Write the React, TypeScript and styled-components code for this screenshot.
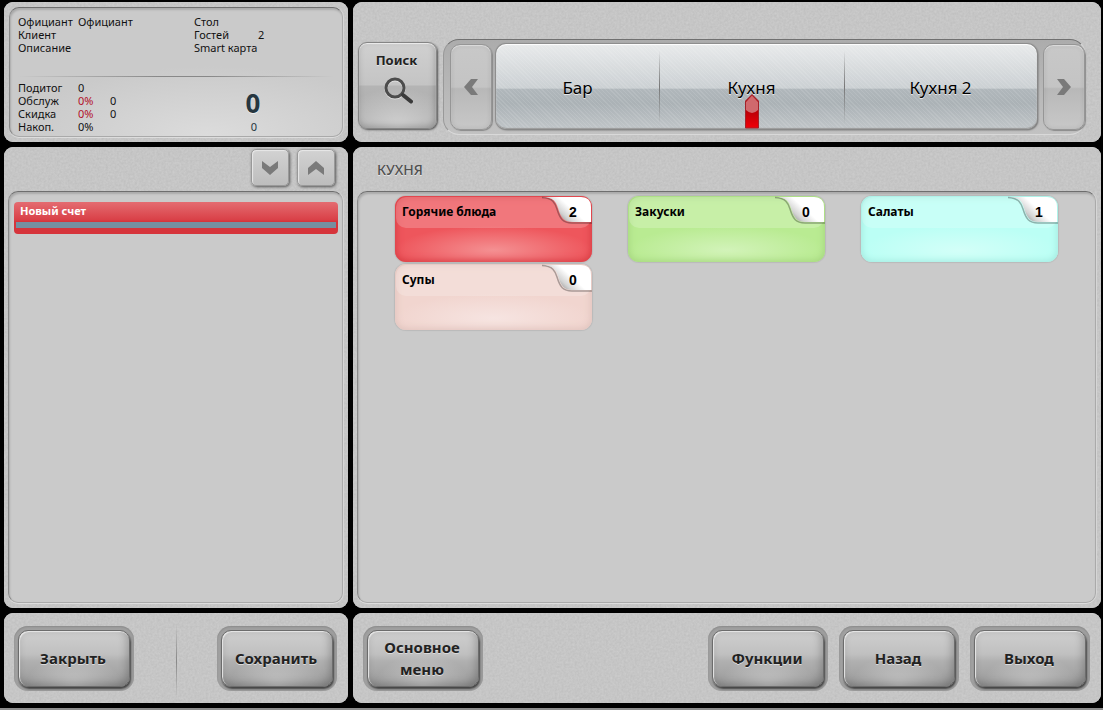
import React, { useState } from "react";
import styled, { createGlobalStyle } from "styled-components";

const humanist = `"Noto Sans", "Open Sans", sans-serif`;

const GlobalStyle = createGlobalStyle`
  *, *::before, *::after { box-sizing: border-box; }
  body {
    margin: 0;
    background: #000;
    color: #111;
    font-family: ${humanist};
    font-size: 11px;
  }
  button { font: inherit; color: inherit; padding: 0; border: 0; cursor: pointer; }
  dl, dd, dt, h1, ul { margin: 0; padding: 0; font: inherit; }
`;

const Page = styled.div`
  display: flex;
  flex-direction: column;
  min-height: 100vh;
`;

const Screen = styled.main`
  flex: 1;
  display: grid;
  grid-template-columns: minmax(0, 344fr) minmax(0, 748fr);
  grid-template-rows: 140px 1fr 90px;
  gap: 5px;
  padding: 2px 2px 5px 4px;
`;

const Panel = styled.section`
  position: relative;
  isolation: isolate;
  display: flex;
  flex-direction: column;
  border-radius: 9px;
  overflow: hidden;
  background: #c6c6c6;
`;

const InfoPanel = styled(Panel)`
  padding: 5px;
`;

const ListPanel = styled(Panel)`
  padding: 0 5px 5px 4px;
`;

const TopPanel = styled(Panel)`
  flex-direction: row;
  align-items: flex-end;
  gap: 6px;
  padding: 0 15px 7px 5px;
`;

const ActionPanel = styled(Panel)`
  flex-direction: row;
  align-items: flex-start;
  gap: 11px;
  padding: 13px 11px 0 10px;
`;

const GrainSvg = styled.svg`
  position: absolute;
  inset: 0;
  z-index: -1;
  width: 100%;
  height: 100%;
`;

const Inset = styled.div`
  flex: 1;
  border-radius: 10px;
  border: 1px solid #aaa;
  border-top-color: #6e6e6e;
  border-left-color: #8a8a8a;
  background: #cacaca;
  box-shadow: inset 1px 2px 2px rgba(0, 0, 0, 0.16), 0 1px 0 #ddd, 1px 0 0 #d6d6d6;
`;

const InfoInset = styled(Inset)`
  display: flex;
  flex-direction: column;
  padding: 7px 8px 3px;
  line-height: 13px;
  background: radial-gradient(ellipse 190px 70px at 60% 100%, #dcdcdc, #cacaca);
`;

const OrderFacts = styled.dl`
  flex: 1;
  display: grid;
  grid-template-columns: 60px 116px 64px 1fr;
  grid-auto-rows: 13px;
`;

const HRule = styled.div`
  height: 1px;
  margin: 0 0 4px;
  background: linear-gradient(90deg, transparent, #888 45%, #888 60%, transparent);
`;

const Totals = styled.div`
  display: grid;
  grid-template-columns: 1fr 168px;
`;

const Sums = styled.dl`
  display: grid;
  grid-template-columns: 60px 32px 1fr;
  grid-auto-rows: 13px;
`;

const Percent = styled.dd<{ $red?: boolean }>`
  color: ${(p) => (p.$red ? "#b3122a" : "inherit")};
`;

const Grand = styled.div`
  display: flex;
  flex-direction: column;
  align-items: center;
  padding: 8px 0 0 6px;
`;

const GrandTotal = styled.strong`
  font-size: 26px;
  line-height: 28px;
  color: #263640;
  text-shadow: 0 1px 0 #eee;
`;

const GrandSub = styled.span`
  padding: 3px 0 0 2px;
  color: #263640;
`;

const SearchButton = styled.button`
  display: flex;
  flex-direction: column;
  align-items: center;
  gap: 7px;
  width: 79px;
  height: 87px;
  padding: 8px 2px 0 0;
  margin-bottom: 6px;
  border: 1px solid #858585;
  border-radius: 9px;
  font-size: 13px;
  line-height: 18px;
  font-weight: 700;
  color: #222;
  text-shadow: 0 1px 0 #e4e4e4;
  background:
    radial-gradient(ellipse 60px 40px at 50% 100%, rgba(255, 255, 255, 0.45), transparent),
    linear-gradient(#d0d0d0, #c4c4c4 49%, #b4b4b4 51%, #acacac);
  box-shadow: inset 0 1px 1px #eee, inset -1px -2px 6px rgba(0, 0, 0, 0.22), 1px 1px 2px #555;
`;

const TabRail = styled.nav`
  flex: 1;
  display: flex;
  align-items: flex-start;
  height: 96px;
  padding: 3px 0 0 6px;
  border: 1px solid #d9d9d9;
  border-top-color: #707070;
  border-left-color: #999;
  border-radius: 16px;
  background: linear-gradient(#acacac, #c2c2c2);
`;

const RailArrow = styled.button`
  display: flex;
  align-items: center;
  justify-content: center;
  width: 42px;
  height: 86px;
  margin-top: 1px;
  border: 1px solid #969696;
  border-radius: 10px;
  background: linear-gradient(#c8c8c8, #c4c4c4 50%, #b8b8b8 52%, #c8c8c8);
  box-shadow: inset 0 1px 1px #ddd, inset 0 0 5px rgba(0, 0, 0, 0.1), 1px 1px 1px #8a8a8a;
`;

const Tabs = styled.div`
  flex: 1;
  display: flex;
  height: 85px;
  margin: 1px 6px 0 4px;
  border-radius: 10px;
  background:
    repeating-linear-gradient(45deg, rgba(255, 255, 255, 0.1) 0 1px, transparent 1px 3px),
    linear-gradient(#e8eaeb, #cbd0d3 52%, #b0b7bb 53%, #abb2b6 70%, #c0c5c8);
  box-shadow: inset 0 1px 1px #fff, inset 0 -1px 1px #999, 0 0 1px 1px #8b8b8b, 1px 1px 2px #555;
`;

const Tab = styled.button<{ $grow: number }>`
  position: relative;
  flex: ${(p) => p.$grow} 1 0;
  padding-top: 3px;
  background: none;
  font-size: 17px;
  line-height: 24px;
  color: #000;
  text-shadow: 0 1px 0 #e8e8e8;
  & + & {
    background: linear-gradient(transparent 8%, #777 50%, transparent 94%) left / 1px 100% no-repeat;
  }
`;

const Pointer = styled.svg`
  position: absolute;
  left: 50%;
  bottom: 0;
  margin-left: -7px;
`;

const ListHeader = styled.header`
  display: flex;
  align-items: center;
  justify-content: flex-end;
  gap: 8px;
  height: 44px;
  padding: 0 8px 3px;
`;

const MenuHeader = styled(ListHeader)`
  justify-content: flex-start;
  padding: 1px 20px 0;
`;

const Title = styled.h1`
  font-size: 14px;
  line-height: 20px;
  font-weight: 500;
  color: #505050;
  text-shadow: 0 1px 0 #e6e6e6;
`;

const ScrollButton = styled.button`
  display: flex;
  align-items: center;
  justify-content: center;
  width: 38px;
  height: 37px;
  border: 1px solid #999;
  border-radius: 5px;
  background: linear-gradient(#d2d2d2, #bdbdbd);
  box-shadow: inset 1px 1px 1px #e8e8e8, 1px 1px 3px #555;
`;

const OrderInset = styled(Inset)`
  padding: 10px 4px 10px 5px;
`;

const OrderLine = styled.button`
  display: block;
  width: 100%;
  height: 32px;
  padding: 0 2px;
  border-radius: 4px;
  background: linear-gradient(#e46c71, #d94047 18px, #d6343b 19px);
  color: #fff;
  font-size: 11px;
  line-height: 18px;
  font-weight: 700;
  text-align: left;
`;

const OrderName = styled.span`
  display: block;
  height: 20px;
  padding-left: 4px;
`;

const OrderBar = styled.span`
  display: block;
  height: 6px;
  margin-bottom: 6px;
  background: #758fa0;
`;

const MenuInset = styled(Inset)`
  padding: 4px 37px;
`;

const TileGrid = styled.div`
  display: grid;
  grid-template-columns: repeat(3, minmax(0, 1fr));
  grid-auto-rows: 66px;
  gap: 2px 36px;
`;

const Tile = styled.button<{ $base: string; $glow: string; $edge: string }>`
  position: relative;
  isolation: isolate;
  padding: 7px;
  border-radius: 11px;
  overflow: hidden;
  font-size: 12px;
  line-height: 18px;
  font-weight: 700;
  color: #000;
  text-align: left;
  display: flex;
  align-items: flex-start;
  background: radial-gradient(ellipse 50% 24px at 50% 54px, ${(p) => p.$glow}, ${(p) => p.$base});
  box-shadow: inset 0 0 7px 1px ${(p) => p.$edge}, 0 0 1px 1px rgba(0, 0, 0, 0.08);
  &::before {
    content: "";
    position: absolute;
    inset: 1px 1px auto;
    z-index: -1;
    height: 31px;
    border-radius: 10px;
    background: rgba(255, 255, 255, 0.2);
  }
`;

const Corner = styled.svg`
  position: absolute;
  top: 0;
  right: 0;
`;

const Count = styled.span`
  position: absolute;
  top: 7px;
  right: 10px;
  width: 18px;
  text-align: center;
  font-family: "Liberation Sans", Arial, sans-serif;
  font-size: 14px;
`;

const Well = styled.div`
  flex: 0 0 120px;
  height: 65px;
  padding: 4px;
  border-radius: 14px;
  background: #a0a0a0;
  box-shadow: inset 0 1px 2px #8a8a8a;
`;

const ActionButton = styled.button`
  width: 100%;
  height: 57px;
  padding: 0 2px 2px 0;
  border: 1px solid #6c6c6c;
  border-radius: 10px;
  font-size: 15px;
  line-height: 22px;
  font-weight: 700;
  color: #222;
  text-shadow: 0 1px 0 #dcdcdc;
  background:
    radial-gradient(ellipse 48px 32px at 50% 100%, rgba(255, 255, 255, 0.36), transparent),
    linear-gradient(#cfcfcf, #c0c0c0 42%, #b0b0b0 55%, #999);
  box-shadow: inset 1px 1px 1px #e8e8e8, inset -2px -2px 8px rgba(0, 0, 0, 0.24), 1px 2px 2px #444;
`;

const Spacer = styled.div`
  flex: 1;
`;

const VRule = styled.div`
  width: 1px;
  height: 74px;
  margin: -2px 0 0 31px;
  background: linear-gradient(transparent, #888 50%, transparent);
`;

const TaskStrip = styled.footer`
  height: 2px;
  background: #8d8d8d;
`;

function Grain({ id }: { id: string }) {
  return (
    <GrainSvg aria-hidden="true">
      <filter id={id} x="0" y="0" width="100%" height="100%" colorInterpolationFilters="sRGB">
        <feTurbulence type="fractalNoise" baseFrequency="0.45" numOctaves="2" seed="4" />
        <feColorMatrix values="0.07 0 0 0 0.74  0.07 0 0 0 0.74  0.07 0 0 0 0.74  0 0 0 0 1" />
      </filter>
      <rect width="100%" height="100%" filter={`url(#${id})`} />
    </GrainSvg>
  );
}

function Chevron({ turn }: { turn: number }) {
  return (
    <svg width="18" height="18" viewBox="0 0 18 18" aria-hidden="true">
      <g transform={`rotate(${turn} 9 9)`}>
        <path d="M1 9 L9 16 L17 9 V2 L9 8 L1 2 Z" fill="#7a7a7a" />
      </g>
    </svg>
  );
}

function Magnifier() {
  return (
    <svg width="32" height="30" viewBox="0 0 32 30" aria-hidden="true">
      <g fill="none" strokeLinecap="round">
        <circle cx="14" cy="13" r="9" stroke="#dedede" strokeWidth="3" />
        <circle cx="14" cy="12" r="9" stroke="#4c4c4c" strokeWidth="3" />
        <path d="M22 19 L30 25.500" stroke="#3a3a3a" strokeWidth="4" />
      </g>
    </svg>
  );
}

const tabs = [
  { name: "Бар", grow: 163 },
  { name: "Кухня", grow: 185 },
  { name: "Кухня 2", grow: 193 },
];

const tiles = [
  { name: "Горячие блюда", count: 2, base: "#ee565c", glow: "#f49092", edge: "#d63c43" },
  { name: "Закуски", count: 0, base: "#b9eb92", glow: "#d2f3b9", edge: "#a5d57f" },
  { name: "Салаты", count: 1, base: "#bbfff5", glow: "#d3fff8", edge: "#a4e9df" },
  { name: "Супы", count: 0, base: "#f1d5cf", glow: "#f6e4e1", edge: "#dfc3bd" },
];

function Action({ children }: { children: React.ReactNode }) {
  return (
    <Well>
      <ActionButton type="button">{children}</ActionButton>
    </Well>
  );
}

export default function App() {
  const [active, setActive] = useState("Кухня");
  return (
    <Page>
      <GlobalStyle />
      <Screen>
        <InfoPanel>
          <Grain id="grain-info" />
          <InfoInset>
            <OrderFacts>
              <dt>Официант</dt>
              <dd>Официант</dd>
              <dt>Стол</dt>
              <dd />
              <dt>Клиент</dt>
              <dd />
              <dt>Гостей</dt>
              <dd>2</dd>
              <dt>Описание</dt>
              <dd />
              <dt>Smart карта</dt>
              <dd />
            </OrderFacts>
            <HRule />
            <Totals>
              <Sums>
                <dt>Подитог</dt>
                <Percent>0</Percent>
                <dd />
                <dt>Обслуж</dt>
                <Percent $red>0%</Percent>
                <dd>0</dd>
                <dt>Скидка</dt>
                <Percent $red>0%</Percent>
                <dd>0</dd>
                <dt>Накоп.</dt>
                <Percent>0%</Percent>
                <dd />
              </Sums>
              <Grand>
                <GrandTotal>0</GrandTotal>
                <GrandSub>0</GrandSub>
              </Grand>
            </Totals>
          </InfoInset>
        </InfoPanel>

        <TopPanel>
          <Grain id="grain-top" />
          <SearchButton type="button">
            Поиск
            <Magnifier />
          </SearchButton>
          <TabRail>
            <RailArrow type="button" aria-label="Предыдущие">
              <Chevron turn={90} />
            </RailArrow>
            <Tabs>
              {tabs.map((t) => (
                <Tab key={t.name} type="button" $grow={t.grow} onClick={() => setActive(t.name)}>
                  {t.name}
                  {t.name === active && (
                    <Pointer width="14" height="35" viewBox="0 0 14 35" aria-hidden="true">
                      <defs>
                        <linearGradient id="pin" x1="0" y1="0" x2="0" y2="1">
                          <stop offset="0.4" stopColor="#b00008" />
                          <stop offset="1" stopColor="#f00008" />
                        </linearGradient>
                      </defs>
                      <path d="M0.500 34 V7 L7 0.500 L13.500 7 V34 Z" fill="url(#pin)" stroke="#a3222a" />
                      <path d="M1 8 L7 1.500 L13 8 V16 Q7 22 1 16 Z" fill="#d0696d" />
                    </Pointer>
                  )}
                </Tab>
              ))}
            </Tabs>
            <RailArrow type="button" aria-label="Следующие">
              <Chevron turn={-90} />
            </RailArrow>
          </TabRail>
        </TopPanel>

        <ListPanel>
          <Grain id="grain-order" />
          <ListHeader>
            <ScrollButton type="button" aria-label="Вниз">
              <Chevron turn={0} />
            </ScrollButton>
            <ScrollButton type="button" aria-label="Вверх">
              <Chevron turn={180} />
            </ScrollButton>
          </ListHeader>
          <OrderInset>
            <OrderLine type="button">
              <OrderName>Новый счет</OrderName>
              <OrderBar />
            </OrderLine>
          </OrderInset>
        </ListPanel>

        <ListPanel>
          <Grain id="grain-menu" />
          <MenuHeader>
            <Title>КУХНЯ</Title>
          </MenuHeader>
          <MenuInset>
            <TileGrid>
              {tiles.map((t, i) => (
                <Tile key={t.name} type="button" $base={t.base} $glow={t.glow} $edge={t.edge}>
                  {t.name}
                  <Corner width="52" height="29" viewBox="0 0 52 29" aria-hidden="true">
                    <defs>
                      <linearGradient id={`curl-${i}`} gradientUnits="userSpaceOnUse" x1="18" y1="24" x2="30" y2="11">
                        <stop offset="0" stopColor="#8f8f8f" />
                        <stop offset="0.45" stopColor="#d4d4d4" />
                        <stop offset="1" stopColor="#fff" />
                      </linearGradient>
                    </defs>
                    <path d="M2 1.500 C13 2 15 7 17 13 C20 23 23 27 32 27 H52" fill="none" stroke="#000" strokeOpacity="0.3" strokeWidth="1.500" />
                    <path d="M2 1 C14 1 16 6 18 12 C21 22 24 26 33 26 H51 V11 Q51 1 41 1 Z" fill={`url(#curl-${i})`} />
                  </Corner>
                  <Count>{t.count}</Count>
                </Tile>
              ))}
            </TileGrid>
          </MenuInset>
        </ListPanel>

        <ActionPanel>
          <Grain id="grain-left" />
          <Action>Закрыть</Action>
          <VRule />
          <Spacer />
          <Action>Сохранить</Action>
        </ActionPanel>

        <ActionPanel>
          <Grain id="grain-right" />
          <Action>
            Основное
            <br />
            меню
          </Action>
          <Spacer />
          <Action>Функции</Action>
          <Action>Назад</Action>
          <Action>Выход</Action>
        </ActionPanel>
      </Screen>
      <TaskStrip />
    </Page>
  );
}
